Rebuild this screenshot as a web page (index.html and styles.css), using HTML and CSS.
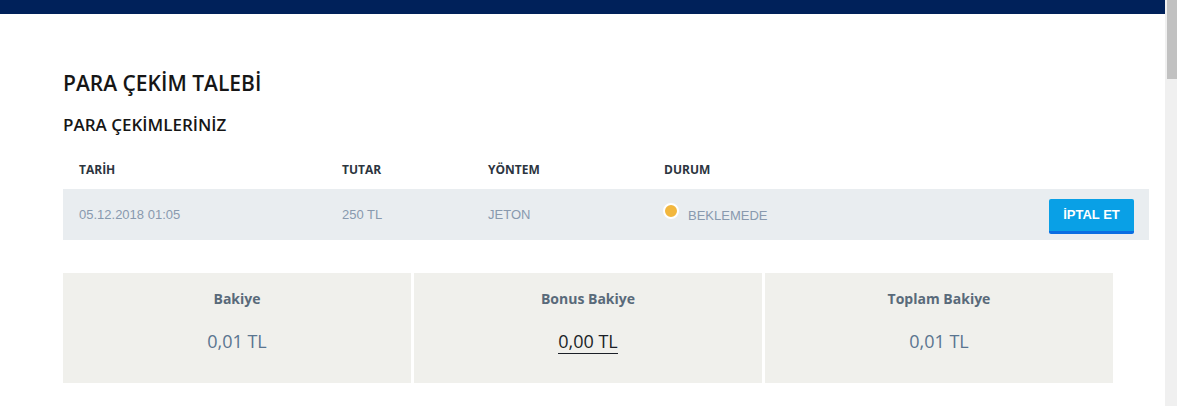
FILE: index.html
```html
<!DOCTYPE html>
<html lang="tr">
<head>
<meta charset="UTF-8">
<meta name="viewport" content="width=device-width, initial-scale=1.0">
<title>Para Çekim Talebi</title>
<link rel="stylesheet" href="styles.css">
</head>
<body>

<div class="page">
  <div class="topbar"></div>

  <div class="content">
    <h1 class="title">PARA ÇEKİM TALEBİ</h1>
    <h2 class="subtitle">PARA ÇEKİMLERİNİZ</h2>

    <table class="withdrawals">
      <colgroup>
        <col class="col-date">
        <col class="col-amount">
        <col class="col-method">
        <col>
      </colgroup>
      <thead>
        <tr>
          <th>TARİH</th>
          <th>TUTAR</th>
          <th>YÖNTEM</th>
          <th>DURUM</th>
        </tr>
      </thead>
      <tbody>
        <tr>
          <td>05.12.2018 01:05</td>
          <td>250 TL</td>
          <td>JETON</td>
          <td class="status-cell">
            <div class="status-row">
              <span class="status"><span class="dot"></span>BEKLEMEDE</span>
              <button class="cancel-btn" type="button">İPTAL ET</button>
            </div>
          </td>
        </tr>
      </tbody>
    </table>

    <div class="balances">
      <div class="balance">
        <div class="balance-label">Bakiye</div>
        <div class="balance-value">0,01 TL</div>
      </div>
      <div class="balance">
        <div class="balance-label">Bonus Bakiye</div>
        <div class="balance-value"><span class="bonus">0,00 TL</span></div>
      </div>
      <div class="balance">
        <div class="balance-label">Toplam Bakiye</div>
        <div class="balance-value">0,01 TL</div>
      </div>
    </div>
  </div>
</div>

<div class="scrollbar"><div class="thumb"></div></div>

</body>
</html>
```

FILE: styles.css
```css
html, body {
  height: 100%;
}
body {
  margin: 0;
  display: flex;
  background-color: #fff;
  font-family: "Open Sans", Arial, sans-serif;
  overflow: hidden;
}
.page {
  flex: 1;
  min-width: 0;
}
.topbar {
  height: 14px;
  background-color: #00215a;
}
.content {
  padding: 55px 16px 0 63px;
}
.title {
  margin: 0;
  font-size: 21px;
  line-height: 28px;
  font-weight: 600;
  color: #161616;
}
.subtitle {
  margin: 16px 0 0;
  font-size: 17px;
  line-height: 24px;
  font-weight: 600;
  color: #161616;
}

/* table */
.withdrawals {
  width: 1086px;
  margin-top: 15px;
  border-collapse: collapse;
  table-layout: fixed;
}
.col-date { width: 263px; }
.col-amount { width: 146px; }
.col-method { width: 176px; }
.withdrawals th {
  padding: 10px 16px 11px;
  font-size: 12px;
  line-height: 16px;
  font-weight: 700;
  color: #2c3540;
  text-align: left;
}
.withdrawals td {
  height: 51px;
  padding: 0 16px;
  background-color: #e9edf0;
  font-family: "Liberation Sans", Arial, sans-serif;
  font-size: 13px;
  line-height: 15px;
  color: #8899ae;
  vertical-align: middle;
}
.withdrawals td.status-cell {
  padding-right: 15px;
}
.status-row {
  display: flex;
  align-items: center;
  justify-content: space-between;
  height: 51px;
}
.status {
  margin-left: -1px;
  padding-bottom: 3px;
}
.dot {
  display: inline-block;
  width: 12px;
  height: 12px;
  margin-right: 9px;
  border: 2px solid #fff;
  border-radius: 50%;
  background-color: #f2b73e;
  vertical-align: 1px;
}
.cancel-btn {
  width: 85px;
  height: 35px;
  margin-top: 3px;
  padding: 0;
  border: none;
  border-bottom: 3px solid #0a6de2;
  border-radius: 2px;
  background-color: #09a0e6;
  color: #fff;
  font-family: "Liberation Sans", Arial, sans-serif;
  font-size: 13px;
  font-weight: 700;
  line-height: 32px;
  cursor: pointer;
}

/* balances */
.balances {
  display: grid;
  grid-template-columns: repeat(3, 348px);
  gap: 3px;
  margin-top: 33px;
}
.balance {
  padding: 16px 0 30px;
  background-color: #f0f0ec;
  text-align: center;
}
.balance-label {
  font-size: 14px;
  line-height: 20px;
  font-weight: 700;
  color: #596a7a;
}
.balance-value {
  margin-top: 20px;
  font-size: 18px;
  line-height: 24px;
  color: #5a7590;
}
.bonus {
  color: #1b1f27;
  border-bottom: 1px solid #1b1f27;
}

/* fake scrollbar */
.scrollbar {
  width: 10px;
  padding-left: 2px;
  background-color: #f0f0f0;
}
.thumb {
  height: 79px;
  background-color: #c1c1c1;
}
```
